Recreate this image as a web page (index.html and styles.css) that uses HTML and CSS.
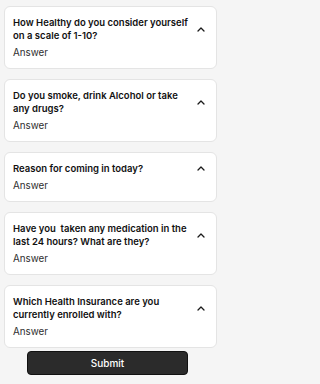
FILE: index.html
```html
<!DOCTYPE html>
<html>
<head>
<meta charset="utf-8">
<link rel="stylesheet" href="styles.css">
</head>
<body>
<main class="page">
  <section class="card">
    <div class="head">
      <h2 class="q">How Healthy do you consider yourself on a scale of 1-10?</h2>
      <svg class="chev" viewBox="0 0 8 5"><path d="M1 4L4 1L7 4"/></svg>
    </div>
    <p class="ans">Answer</p>
  </section>
  <section class="card">
    <div class="head">
      <h2 class="q">Do you smoke, drink Alcohol or take any drugs?</h2>
      <svg class="chev" viewBox="0 0 8 5"><path d="M1 4L4 1L7 4"/></svg>
    </div>
    <p class="ans">Answer</p>
  </section>
  <section class="card">
    <div class="head">
      <h2 class="q">Reason for coming in today?</h2>
      <svg class="chev" viewBox="0 0 8 5"><path d="M1 4L4 1L7 4"/></svg>
    </div>
    <p class="ans">Answer</p>
  </section>
  <section class="card">
    <div class="head">
      <h2 class="q">Have you&nbsp; taken any medication in the last 24 hours? What are they?</h2>
      <svg class="chev" viewBox="0 0 8 5"><path d="M1 4L4 1L7 4"/></svg>
    </div>
    <p class="ans">Answer</p>
  </section>
  <section class="card">
    <div class="head">
      <h2 class="q">Which Health Insurance are you currently enrolled with?</h2>
      <svg class="chev" viewBox="0 0 8 5"><path d="M1 4L4 1L7 4"/></svg>
    </div>
    <p class="ans">Answer</p>
  </section>
  <div class="actions">
    <button class="submit" type="button">Submit</button>
  </div>
</main>
</body>
</html>
```
FILE: styles.css
```css
html, body {
  margin: 0;
  padding: 0;
  background: #f5f5f5;
}
body {
  font-family: Inter, "Noto Sans", sans-serif;
  color: #1a1a1a;
}
.page {
  box-sizing: border-box;
  width: 222px;
  display: flex;
  flex-direction: column;
  gap: 10px;
  padding: 6px 5px 0 4px;
}
.card {
  background: #fff;
  border: 1px solid #e4e4e4;
  border-radius: 6px;
  padding: 9px 10px 9px 8px;
  display: flex;
  flex-direction: column;
  gap: 4px;
}
.head {
  display: flex;
  align-items: center;
  gap: 8px;
}
.q {
  flex: 1;
  margin: 0;
  font-size: 9.5px;
  line-height: 13px;
  font-weight: 600;
  color: #111;
}
.chev {
  width: 8px;
  height: 5px;
  flex: none;
  margin-right: 1px;
}
.chev path {
  fill: none;
  stroke: #1a1a1a;
  stroke-width: 1.3;
  stroke-linecap: round;
  stroke-linejoin: round;
}
.ans {
  margin: 0;
  font-size: 9.8px;
  line-height: 13px;
  color: #2e2e2e;
}
.actions {
  display: flex;
  margin-top: -7px;
}
.submit {
  width: 161px;
  height: 24px;
  margin-left: 23px;
  border: 1px solid #111;
  border-radius: 4px;
  background: #2b2b2b;
  color: #fff;
  font-family: Inter, "Noto Sans", sans-serif;
  font-size: 10px;
  font-weight: 500;
}
```
